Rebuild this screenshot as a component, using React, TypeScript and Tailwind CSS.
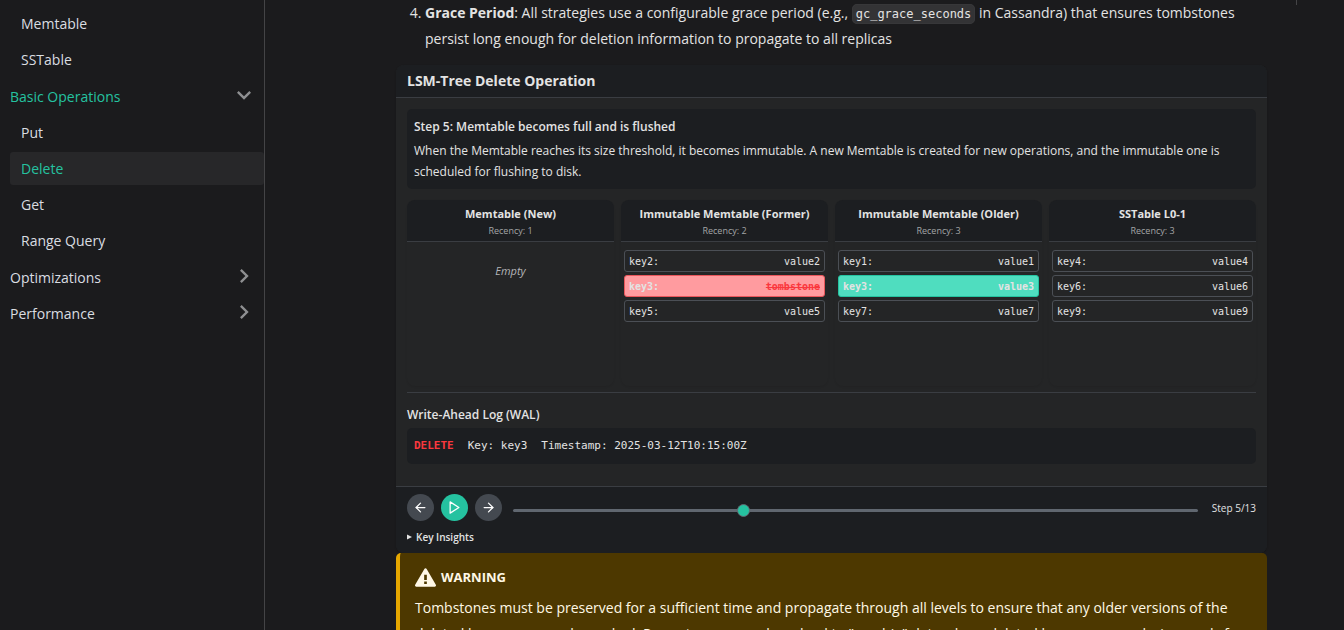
import { useState, type ReactNode } from "react";
import { ArrowLeft, ArrowRight } from "lucide-react";

type Row = { key: string; value: string; state?: "deleted" | "match" };
type Store = { title: string; recency: number; rows: Row[] };

const stores: Store[] = [
  { title: "Memtable (New)", recency: 1, rows: [] },
  {
    title: "Immutable Memtable (Former)",
    recency: 2,
    rows: [
      { key: "key2", value: "value2" },
      { key: "key3", value: "tombstone", state: "deleted" },
      { key: "key5", value: "value5" },
    ],
  },
  {
    title: "Immutable Memtable (Older)",
    recency: 3,
    rows: [
      { key: "key1", value: "value1" },
      { key: "key3", value: "value3", state: "match" },
      { key: "key7", value: "value7" },
    ],
  },
  {
    title: "SSTable L0-1",
    recency: 3,
    rows: [
      { key: "key4", value: "value4" },
      { key: "key6", value: "value6" },
      { key: "key9", value: "value9" },
    ],
  },
];

const rowStyles = {
  plain: "border-[#4b4f55] text-[#e3e3e3]",
  deleted: "border-[#e9565b] bg-[#ff9b9f] font-bold text-[#e3e3e3]",
  match: "border-[#25c2a0] bg-[#4fddbf] font-bold text-[#e3e3e3]",
};

function Chevron({ open }: { open?: boolean }) {
  return (
    <svg
      viewBox="0 0 24 24"
      aria-hidden="true"
      className={open ? "size-7 rotate-180 text-[#8e8f91]" : "size-7 rotate-90 text-[#8e8f91]"}
    >
      <path fill="currentColor" d="M7.41 15.41L12 10.83l4.59 4.58L18 14l-6-6-6 6z" />
    </svg>
  );
}

function Category({ label, open }: { label: string; open?: boolean }) {
  return (
    <div className="flex h-[33px] items-center justify-between pr-[6px]">
      <a href="#" className={open ? "text-[#25c2a0]" : "text-[#dadde1]"}>
        {label}
      </a>
      <button type="button" aria-label={`Toggle ${label}`} className="-mt-[3px]">
        <Chevron open={open} />
      </button>
    </div>
  );
}

function Item({ label, active }: { label: string; active?: boolean }) {
  return (
    <li>
      <a
        href="#"
        className={
          active
            ? "flex h-[33px] items-center rounded-[3px] bg-[#272729] pl-[11px] text-[#25c2a0]"
            : "flex h-[33px] items-center rounded-[3px] pl-[11px] text-[#dadde1]"
        }
      >
        {label}
      </a>
    </li>
  );
}

function StoreColumn({ title, recency, rows }: Store) {
  return (
    <section className="min-h-[186px] rounded-lg shadow-[0_1px_2px_rgba(0,0,0,0.08)]">
      <header className="flex h-[42px] flex-col items-center rounded-t-lg border-b border-[#3a3d42] bg-[#1c1e21] pt-[5px]">
        <h4 className="text-[11px] leading-[17px] font-bold">{title}</h4>
        <p className="text-[9px] leading-[17px] text-[#a3a4a6]">Recency: {recency}</p>
      </header>
      {rows.length === 0 ? (
        <p className="pt-[20px] text-center text-[11px] leading-[18px] text-[#b4b6b9] italic">Empty</p>
      ) : (
        <ul className="flex flex-col gap-[3px] px-[3px] pt-[8px]">
          {rows.map((row) => (
            <li
              key={row.key}
              className={`flex h-[22px] items-center justify-between rounded-[3px] border px-1 font-['DejaVu_Sans_Mono',monospace] text-[10px] ${rowStyles[row.state ?? "plain"]}`}
            >
              <span>{row.key}:</span>
              <span className={row.state === "deleted" ? "text-[#fa383e] line-through" : ""}>{row.value}</span>
            </li>
          ))}
        </ul>
      )}
    </section>
  );
}

function RoundButton({ label, primary, children }: { label: string; primary?: boolean; children: ReactNode }) {
  return (
    <button
      type="button"
      aria-label={label}
      className={
        primary
          ? "flex size-[27px] items-center justify-center rounded-full bg-[#25c2a0] text-white"
          : "flex size-[27px] items-center justify-center rounded-full bg-[#444950] text-white"
      }
    >
      {children}
    </button>
  );
}

export default function App() {
  const [step, setStep] = useState(5);

  return (
    <div className="flex h-screen overflow-hidden bg-[#1b1b1d] font-['Open_Sans','Noto_Sans',sans-serif] text-[#e3e3e3]">
      <nav aria-label="Docs sidebar" className="w-[265px] shrink-0 border-r border-[#444446] pt-[7px] pl-[10px] text-[14px]">
        <ul className="flex flex-col gap-[3px]">
          <Item label="Memtable" />
          <Item label="SSTable" />
        </ul>
        <div className="mt-1">
          <Category label="Basic Operations" open />
          <ul className="mt-[3px] flex flex-col gap-[3px]">
            <Item label="Put" />
            <Item label="Delete" active />
            <Item label="Get" />
            <Item label="Range Query" />
          </ul>
        </div>
        <div className="mt-1 flex flex-col gap-[3px]">
          <Category label="Optimizations" />
          <Category label="Performance" />
        </div>
      </nav>

      <main className="flex min-w-0 flex-1 items-start pl-[131px]">
        <article className="min-w-0 flex-1">
          <ol start={4} className="list-decimal pl-[29px] text-[14px] leading-[26px]">
            <li>
              <strong>Grace Period</strong>: All strategies use a configurable grace period (e.g.,{" "}
              <code className="rounded-[5px] border border-[#373739] bg-[#333335] px-[3px] py-[2px] font-['DejaVu_Sans_Mono',monospace] text-[12px] leading-none">
                gc_grace_seconds
              </code>{" "}
              in Cassandra) that ensures tombstones persist long enough for deletion information to propagate to all
              replicas
            </li>
          </ol>

          <section className="mt-[13px] overflow-hidden rounded-lg bg-[#242526] shadow-[0_1px_2px_rgba(0,0,0,0.2)]">
            <h2 className="border-b border-[#3a3d42] bg-[#1c1e21] px-[11px] py-[5px] text-[14px] leading-[22px] font-bold">
              LSM-Tree Delete Operation
            </h2>

            <div className="px-[11px] pt-[11px] pb-[22px]">
              <div className="rounded-[5px] bg-[#1c1e21] p-[7px]">
                <h3 className="text-[12px] leading-[21px] font-semibold">Step 5: Memtable becomes full and is flushed</h3>
                <p className="mt-[3px] text-[12px] leading-[21px]">
                  When the Memtable reaches its size threshold, it becomes immutable. A new Memtable is created for new
                  operations, and the immutable one is scheduled for flushing to disk.
                </p>
              </div>

              <div className="mt-[11px] grid grid-cols-4 gap-[7px]">
                {stores.map((store) => (
                  <StoreColumn key={store.title} {...store} />
                ))}
              </div>

              <div className="mt-[6px] border-t border-[#3a3d42] pt-[11px]">
                <h3 className="text-[12px] leading-[21px] font-semibold">Write-Ahead Log (WAL)</h3>
                <div className="mt-[3px] flex h-9 items-center gap-[14px] rounded-[5px] bg-[#1c1e21] px-[7px] font-['DejaVu_Sans_Mono',monospace] text-[11px]">
                  <span className="font-bold text-[#fa383e]">DELETE</span>
                  <span>Key: key3</span>
                  <span>Timestamp: 2025-03-12T10:15:00Z</span>
                </div>
              </div>
            </div>

            <footer className="border-t border-[#3a3d42] bg-[#1c1e21] px-[11px] pt-[7px] pb-[7px]">
              <div className="flex items-center gap-[7px]">
                <RoundButton label="Previous step">
                  <ArrowLeft size={15} />
                </RoundButton>
                <RoundButton label="Play" primary>
                  <svg
                    viewBox="0 0 24 24"
                    fill="none"
                    stroke="currentColor"
                    strokeWidth="2"
                    strokeLinecap="round"
                    strokeLinejoin="round"
                    aria-hidden="true"
                    className="size-[15px]"
                  >
                    <path d="M5 3l14 9-14 9z" />
                  </svg>
                </RoundButton>
                <RoundButton label="Next step">
                  <ArrowRight size={15} />
                </RoundButton>
                <input
                  type="range"
                  aria-label="Step"
                  min={1}
                  max={13}
                  value={step}
                  onChange={(e) => setStep(Number(e.target.value))}
                  className="mx-1 mt-[5px] h-[13px] min-w-0 flex-1 appearance-none bg-transparent [&::-webkit-slider-runnable-track]:h-[3px] [&::-webkit-slider-runnable-track]:rounded-full [&::-webkit-slider-runnable-track]:bg-[#606770] [&::-webkit-slider-thumb]:-mt-[5px] [&::-webkit-slider-thumb]:size-[13px] [&::-webkit-slider-thumb]:appearance-none [&::-webkit-slider-thumb]:rounded-full [&::-webkit-slider-thumb]:border [&::-webkit-slider-thumb]:border-[#606770] [&::-webkit-slider-thumb]:bg-[#25c2a0]"
                />
                <span className="pt-[2px] pl-[3px] text-[10px] whitespace-nowrap">Step {step}/13</span>
              </div>
              <details className="mt-[7px] text-[10px] leading-[18px]">
                <summary className="flex list-none items-center gap-[4px] font-semibold">
                  <svg viewBox="0 0 5 6" aria-hidden="true" className="h-[6px] w-[5px]">
                    <path fill="currentColor" d="M0 0.5L5 3L0 5.5z" />
                  </svg>
                  Key Insights
                </summary>
              </details>
            </footer>
          </section>

          <aside className="rounded-[5px] border-l-4 border-[#e6a700] bg-[#4d3800] px-[15px] pt-[12px] pb-[14px] text-[#fff8e6]">
            <h5 className="flex items-center gap-[5px] text-[13px] leading-[25px] font-bold">
              <svg viewBox="0 0 16 16" aria-hidden="true" className="size-[21px]">
                <path
                  fill="currentColor"
                  fillRule="evenodd"
                  d="M8.893 1.5c-.183-.31-.52-.5-.887-.5s-.703.19-.886.5L.138 13.499a.98.98 0 0 0 0 1.001c.193.31.53.501.886.501h13.964c.367 0 .704-.19.877-.5a1.03 1.03 0 0 0 .01-1.002L8.893 1.5zm.133 11.497H6.987v-2.003h2.039v2.003zm0-3.004H6.987V5.987h2.039v4.006z"
                />
              </svg>
              WARNING
            </h5>
            <p className="mt-[5px] text-[14px] leading-[26px]">
              Tombstones must be preserved for a sufficient time and propagate through all levels to ensure that any
              older versions of the deleted keys are properly masked. Premature removal can lead to "zombie" data where
              deleted keys reappear during reads for
            </p>
          </aside>
        </article>

        <div className="ml-[29px] h-[5px] w-12 shrink-0 border-l border-[#444446]" />
      </main>
    </div>
  );
}
